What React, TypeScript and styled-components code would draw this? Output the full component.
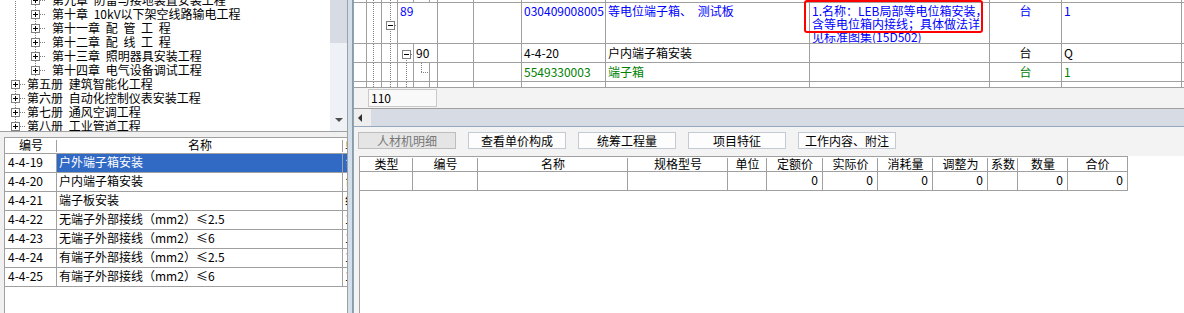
import React from "react";
import styled, { createGlobalStyle } from "styled-components";

const LINE = "#a0a0a0";
const DOT = "#808080";
const BLUE = "#0000ff";
const GREEN = "#008000";

const GlobalStyle = createGlobalStyle`
  * { box-sizing: border-box; }
  html, body { margin: 0; padding: 0; }
  body {
    font-family: "Noto Sans CJK SC", "Liberation Sans", sans-serif;
    font-size: 12px;
    word-spacing: 3px;
    color: #000;
    background: #f0f0f0;
  }
`;

const Screen = styled.div`
  display: flex;
  width: 1184px;
  height: 313px;
  overflow: hidden;
  background: #f0f0f0;
`;

/* left: chapter tree + code list */

const LeftPane = styled.div`
  width: 348px;
  flex: none;
  display: flex;
  flex-direction: column;
  border-right: 1px solid ${LINE};
`;

const TreeFrame = styled.div`
  height: 132px;
  flex: none;
  display: flex;
  background: #fff;
  border-bottom: 1px solid ${LINE};
`;

const TreeList = styled.div`
  flex: 1;
  overflow: hidden;
`;

const TreeRows = styled.div`
  margin-top: -7px;
`;

const TreeRow = styled.div`
  display: flex;
  align-items: center;
  height: 14px;
  line-height: 14px;
  white-space: nowrap;
`;

const VScroll = styled.div`
  width: 17px;
  flex: none;
  display: flex;
  flex-direction: column;
  background: #eef1f6;
`;

const VThumb = styled.div`
  height: 43px;
  background: #d6dbe4;
`;

const VTrack = styled.div`
  flex: 1;
  display: flex;
  align-items: flex-end;
  justify-content: center;
  padding-bottom: 9px;
`;

const ArrowDown = styled.span`
  width: 0;
  height: 0;
  border-left: 4px solid transparent;
  border-right: 4px solid transparent;
  border-top: 4px solid #505050;
`;

const Gap = styled.div`
  height: 5px;
  flex: none;
`;

const CodeTable = styled.div`
  flex: 1;
  margin-left: 4px;
  background: #fff;
  border-left: 1px solid ${LINE};
  border-top: 1px solid ${LINE};
`;

const CodeGrid = styled.div`
  display: grid;
  grid-template-columns: 52px 286px 1fr;
`;

const CodeHeadCell = styled.div<{ $last?: boolean }>`
  height: 16px;
  line-height: 13px;
  overflow: hidden;
  white-space: nowrap;
  text-align: ${(p) => (p.$last ? "left" : "center")};
  padding-left: ${(p) => (p.$last ? 2 : 0)}px;
  border-bottom: 1px solid ${LINE};
  background: ${(p) =>
    p.$last
      ? "#fff"
      : `#fff linear-gradient(${LINE}, ${LINE}) no-repeat right center / 1px 12px`};
`;

const CodeCell = styled.div<{ $last?: boolean; $selected?: boolean; $pad?: number }>`
  height: 19px;
  line-height: 16px;
  overflow: hidden;
  white-space: nowrap;
  padding-left: ${(p) => p.$pad ?? 2}px;
  border-bottom: 1px solid ${LINE};
  border-right: ${(p) => (p.$last ? "none" : `1px solid ${LINE}`)};
  background: ${(p) => (p.$selected ? "#316ac5" : "#fff")};
  color: ${(p) => (p.$selected ? "#fff" : "#000")};
`;

const Splitter = styled.div`
  width: 5px;
  flex: none;
  background: #d3dfeb;
  border-right: 1px solid #7f9db9;
`;

/* right: bill grid, toolbar, detail table */

const RightPane = styled.div`
  flex: 1;
  min-width: 0;
  display: flex;
  flex-direction: column;
  position: relative;
  border-left: 1px solid ${LINE};
  background: #f3f3f3;
`;

const COLS =
  "13px 15px 16px 16px 16px 8px 36px 48px 84px 204px 180px 72px 120px 1fr";

const TopGrid = styled.div`
  flex: none;
  background: #fff;
`;

const GridRow = styled.div<{ $h: number }>`
  display: grid;
  grid-template-columns: ${COLS};
  height: ${(p) => p.$h}px;
`;

const Cell = styled.div<{
  $span?: number;
  $color?: string;
  $center?: boolean;
  $top?: number;
  $lh?: number;
}>`
  grid-column: span ${(p) => p.$span ?? 1};
  border-right: 1px solid ${LINE};
  border-bottom: 1px solid ${LINE};
  overflow: hidden;
  white-space: nowrap;
  padding: ${(p) => p.$top ?? 0}px 2px 0;
  line-height: ${(p) => p.$lh ?? 14}px;
  color: ${(p) => p.$color ?? "#000"};
  text-align: ${(p) => (p.$center ? "center" : "left")};
`;

const TreeCell = styled.div`
  border-right: 1px solid ${LINE};
  border-bottom: 1px solid ${LINE};
  overflow: hidden;
`;

const Filler = styled.div`
  border-bottom: 1px solid ${LINE};
`;

const DescCell = styled(Cell)`
  white-space: normal;
  line-height: 13px;
`;

const DescLine = styled.span`
  display: block;
  white-space: nowrap;
`;

const Annotation = styled.div`
  position: absolute;
  left: 450px;
  top: 0;
  width: 179px;
  height: 33px;
  border: 2px solid #ff0000;
  border-radius: 3px;
  pointer-events: none;
`;

const GridFooter = styled.div`
  height: 21px;
  flex: none;
  padding: 1px 0 0 14px;
  border-bottom: 1px solid ${LINE};
`;

const CountBox = styled.div`
  width: 69px;
  height: 18px;
  border: 1px solid #c9c9c9;
  background: #f9f9f9;
  padding-left: 2px;
  line-height: 16px;
`;

const HScroll = styled.div`
  height: 18px;
  flex: none;
  display: flex;
  background: #d6dbe4;
  border-bottom: 1px solid #94a9bc;
`;

const HLeftButton = styled.div`
  width: 17px;
  display: flex;
  align-items: center;
  padding-left: 4px;
  background: #eeeeee;
`;

const ArrowLeft = styled.span`
  width: 0;
  height: 0;
  border-top: 4px solid transparent;
  border-bottom: 4px solid transparent;
  border-right: 4px solid #303030;
`;

const Toolbar = styled.div`
  height: 29px;
  flex: none;
  display: flex;
  gap: 12px;
  padding: 5px 0 0 4px;
`;

const ToolButton = styled.button`
  width: 98px;
  height: 17px;
  padding: 0;
  font-family: inherit;
  font-size: 12px;
  word-spacing: inherit;
  line-height: 15px;
  color: #000;
  background: #fdfdfd;
  border: 1px solid #c4cad4;
  border-radius: 0;

  &:disabled {
    color: #777;
    background: #e5e5e5;
    border-color: #bdbdbd;
  }
`;

const DetailArea = styled.div`
  flex: 1;
  margin-left: 5px;
  background: #fff;
  border-left: 1px solid ${LINE};
`;

const DETAIL_COLS = "53px 65px 150px 100px 39px 56px 55px 55px 55px 30px 50px 60px";

const DetailGrid = styled.div`
  display: grid;
  grid-template-columns: ${DETAIL_COLS};
  width: 768px;
`;

const DetailHead = styled.div<{ $last?: boolean }>`
  height: 16px;
  line-height: 14px;
  text-align: center;
  white-space: nowrap;
  overflow: hidden;
  border-top: 1px solid ${LINE};
  border-bottom: 1px solid ${LINE};
  border-right: ${(p) => (p.$last ? `1px solid ${LINE}` : "none")};
  background: ${(p) =>
    p.$last
      ? "#fff"
      : `#fff linear-gradient(${LINE}, ${LINE}) no-repeat right bottom / 1px 13px`};
`;

const DetailCell = styled.div`
  height: 19px;
  line-height: 16px;
  text-align: right;
  padding-right: 4px;
  border-right: 1px solid ${LINE};
  border-bottom: 1px solid ${LINE};
`;

const GuideSvg = styled.svg`
  display: block;
  shape-rendering: crispEdges;
`;

/* tree connector drawing bits */

const DotV = ({ x, y1, y2 }: { x: number; y1: number; y2: number }) => (
  <line x1={x + 0.5} y1={y1} x2={x + 0.5} y2={y2} stroke={DOT} strokeDasharray="1 1" />
);

const DotH = ({ y, x1, x2 }: { y: number; x1: number; x2: number }) => (
  <line x1={x1} y1={y + 0.5} x2={x2} y2={y + 0.5} stroke={DOT} strokeDasharray="1 1" />
);

const Expander = ({ x, y, open }: { x: number; y: number; open?: boolean }) => (
  <g>
    <rect x={x + 0.5} y={y + 0.5} width={8} height={8} fill="#fff" stroke="#808080" />
    <line x1={x + 2} y1={y + 4.5} x2={x + 7} y2={y + 4.5} stroke="#000" />
    {!open && <line x1={x + 4.5} y1={y + 2} x2={x + 4.5} y2={y + 7} stroke="#000" />}
  </g>
);

const TreeGuide = ({ level }: { level: number }) => {
  const w = level === 1 ? 27 : 52;
  const bx = level === 1 ? 11 : 31;
  return (
    <GuideSvg width={w} height={14}>
      <DotV x={15} y1={0} y2={14} />
      {level === 2 && <DotV x={35} y1={0} y2={14} />}
      <DotH y={7} x1={bx + 9} x2={bx + 14} />
      <Expander x={bx} y={3} />
    </GuideSvg>
  );
};

const TREE = [
  { level: 2, text: "第九章 防雷与接地装置安装工程" },
  { level: 2, text: "第十章 10kV以下架空线路输电工程" },
  { level: 2, text: "第十一章 配 管 工 程" },
  { level: 2, text: "第十二章 配 线 工 程" },
  { level: 2, text: "第十三章 照明器具安装工程" },
  { level: 2, text: "第十四章 电气设备调试工程" },
  { level: 1, text: "第五册 建筑智能化工程" },
  { level: 1, text: "第六册 自动化控制仪表安装工程" },
  { level: 1, text: "第七册 通风空调工程" },
  { level: 1, text: "第八册 工业管道工程" },
];

const CODES = [
  { code: "4-4-19", name: "户外端子箱安装", unit: "台" },
  { code: "4-4-20", name: "户内端子箱安装", unit: "台" },
  { code: "4-4-21", name: "端子板安装", unit: "组" },
  { code: "4-4-22", name: "无端子外部接线（mm2）≤2.5", unit: "10个" },
  { code: "4-4-23", name: "无端子外部接线（mm2）≤6", unit: "10个" },
  { code: "4-4-24", name: "有端子外部接线（mm2）≤2.5", unit: "10个" },
  { code: "4-4-25", name: "有端子外部接线（mm2）≤6", unit: "10个" },
];

const DETAIL_HEADS = [
  "类型", "编号", "名称", "规格型号", "单位", "定额价",
  "实际价", "消耗量", "调整为", "系数", "数量", "合价",
];
const DETAIL_ROW = ["", "", "", "", "", "0", "0", "0", "0", "", "0", "0"];

const BUTTONS = ["人材机明细", "查看单价构成", "统筹工程量", "项目特征", "工作内容、附注"];

// column 1 and 2 of the bill grid carry the outer tree lines on every row
const OuterGuides = ({ h }: { h: number }) => (
  <>
    <TreeCell />
    <TreeCell>
      <GuideSvg width={14} height={h}>
        <DotV x={6} y1={0} y2={h} />
      </GuideSvg>
    </TreeCell>
  </>
);

const Blank = ({ n }: { n: number }) => (
  <>
    {Array.from({ length: n }, (_, i) => (
      <Cell key={i} />
    ))}
  </>
);

export default function App() {
  return (
    <>
      <GlobalStyle />
      <Screen>
        <LeftPane>
          <TreeFrame>
            <TreeList>
              <TreeRows>
                {TREE.map((item) => (
                  <TreeRow key={item.text}>
                    <TreeGuide level={item.level} />
                    <span>{item.text}</span>
                  </TreeRow>
                ))}
              </TreeRows>
            </TreeList>
            <VScroll>
              <VThumb />
              <VTrack>
                <ArrowDown />
              </VTrack>
            </VScroll>
          </TreeFrame>
          <Gap />
          <CodeTable>
            <CodeGrid>
              <CodeHeadCell>编号</CodeHeadCell>
              <CodeHeadCell>名称</CodeHeadCell>
              <CodeHeadCell $last>单位</CodeHeadCell>
              {CODES.map((row, i) => (
                <React.Fragment key={row.code}>
                  <CodeCell $pad={3}>{row.code}</CodeCell>
                  <CodeCell $selected={i === 0}>{row.name}</CodeCell>
                  <CodeCell $last $selected={i === 0}>
                    {row.unit}
                  </CodeCell>
                </React.Fragment>
              ))}
            </CodeGrid>
          </CodeTable>
        </LeftPane>

        <Splitter />

        <RightPane>
          <TopGrid>
            <GridRow $h={3}>
              <OuterGuides h={2} />
              <TreeCell>
                <GuideSvg width={15} height={2}>
                  <DotV x={8} y1={0} y2={2} />
                </GuideSvg>
              </TreeCell>
              <Blank n={10} />
              <Filler />
            </GridRow>

            <GridRow $h={41}>
              <OuterGuides h={40} />
              <TreeCell>
                <GuideSvg width={15} height={40}>
                  <DotV x={8} y1={0} y2={40} />
                  <DotH y={22} x1={13} x2={15} />
                  <Expander x={4} y={18} open />
                </GuideSvg>
              </TreeCell>
              <Cell $span={3} $top={1} $color={BLUE}>89</Cell>
              <Blank n={2} />
              <Cell $top={1} $color={BLUE}>030409008005</Cell>
              <Cell $top={1} $color={BLUE}>等电位端子箱、 测试板</Cell>
              <DescCell $top={1} $color={BLUE}>
                <DescLine>1.名称：LEB局部等电位箱安装，</DescLine>
                <DescLine>含等电位箱内接线；具体做法详</DescLine>
                <DescLine>见标准图集(15D502)</DescLine>
              </DescCell>
              <Cell $top={1} $center $color={BLUE}>台</Cell>
              <Cell $top={1} $color={BLUE}>1</Cell>
              <Filler />
            </GridRow>

            <GridRow $h={19}>
              <OuterGuides h={18} />
              <TreeCell>
                <GuideSvg width={15} height={18}>
                  <DotV x={8} y1={0} y2={18} />
                </GuideSvg>
              </TreeCell>
              <TreeCell>
                <GuideSvg width={15} height={18}>
                  <DotV x={8} y1={6} y2={18} />
                  <DotH y={10} x1={13} x2={15} />
                  <Expander x={4} y={6} open />
                </GuideSvg>
              </TreeCell>
              <Cell $span={2} $lh={18}>90</Cell>
              <Blank n={2} />
              <Cell $lh={18}>4-4-20</Cell>
              <Cell $lh={18}>户内端子箱安装</Cell>
              <Cell />
              <Cell $lh={18} $center>台</Cell>
              <Cell $lh={18}>Q</Cell>
              <Filler />
            </GridRow>

            <GridRow $h={19}>
              <OuterGuides h={18} />
              <TreeCell>
                <GuideSvg width={15} height={18}>
                  <DotV x={8} y1={0} y2={18} />
                </GuideSvg>
              </TreeCell>
              <TreeCell>
                <GuideSvg width={15} height={18}>
                  <DotV x={8} y1={0} y2={18} />
                </GuideSvg>
              </TreeCell>
              <TreeCell>
                <GuideSvg width={15} height={18}>
                  <DotV x={7} y1={0} y2={9} />
                  <DotH y={9} x1={7} x2={14} />
                </GuideSvg>
              </TreeCell>
              <Blank n={3} />
              <Cell $lh={18} $color={GREEN}>5549330003</Cell>
              <Cell $lh={18} $color={GREEN}>端子箱</Cell>
              <Cell />
              <Cell $lh={18} $center $color={GREEN}>台</Cell>
              <Cell $lh={18} $color={GREEN}>1</Cell>
              <Filler />
            </GridRow>

            <GridRow $h={6}>
              <OuterGuides h={5} />
              <TreeCell>
                <GuideSvg width={15} height={5}>
                  <DotV x={8} y1={0} y2={5} />
                </GuideSvg>
              </TreeCell>
              <TreeCell>
                <GuideSvg width={15} height={5}>
                  <DotV x={8} y1={0} y2={5} />
                </GuideSvg>
              </TreeCell>
              <Blank n={9} />
              <Filler />
            </GridRow>
          </TopGrid>

          <GridFooter>
            <CountBox>110</CountBox>
          </GridFooter>

          <HScroll>
            <HLeftButton>
              <ArrowLeft />
            </HLeftButton>
          </HScroll>

          <Toolbar>
            {BUTTONS.map((label, i) => (
              <ToolButton key={label} disabled={i === 0}>
                {label}
              </ToolButton>
            ))}
          </Toolbar>

          <DetailArea>
            <DetailGrid>
              {DETAIL_HEADS.map((h, i) => (
                <DetailHead key={h} $last={i === DETAIL_HEADS.length - 1}>
                  {h}
                </DetailHead>
              ))}
              {DETAIL_ROW.map((v, i) => (
                <DetailCell key={i}>{v}</DetailCell>
              ))}
            </DetailGrid>
          </DetailArea>

          <Annotation />
        </RightPane>
      </Screen>
    </>
  );
}
